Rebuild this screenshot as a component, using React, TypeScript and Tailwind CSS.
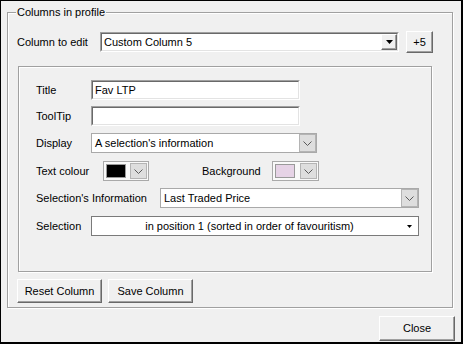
import type { ReactNode } from "react"

const etched = "border border-[#a0a0a0] shadow-[inset_1px_1px_0_#ffffff,1px_1px_0_#ffffff]"

function Chevron() {
  return (
    <svg width="9" height="5" viewBox="0 0 9 5" className="block">
      <polyline points="0.5,0.5 4.5,4.5 8.5,0.5" fill="none" stroke="#5a5a5a" strokeWidth="1" />
    </svg>
  )
}

function Triangle({ w = 7, h = 4 }: { w?: number; h?: number }) {
  return (
    <svg width={w} height={h} viewBox={`0 0 ${w} ${h}`} className="block">
      <polygon points={`0,0 ${w},0 ${w / 2},${h}`} fill="#000000" />
    </svg>
  )
}

// sunken 3D edit box, like a WinForms Fixed3D TextBox
function Sunken({ width, children }: { width: string; children?: ReactNode }) {
  return (
    <div className={`${width} h-[20px] border border-t-[#a0a0a0] border-l-[#a0a0a0] border-r-white border-b-white`}>
      <div className="flex h-full items-center border border-t-[#696969] border-l-[#696969] border-r-[#e3e3e3] border-b-[#e3e3e3] bg-white">
        {children}
      </div>
    </div>
  )
}

function FlatCombo({ width, value }: { width: string; value: string }) {
  return (
    <div className={`${width} flex h-[20px] border border-[#a9a9a9] bg-white`}>
      <span className="flex-1 truncate pl-[3px] leading-[18px]">{value}</span>
      <div className="flex w-[17px] items-center justify-center border border-[#b4b4b4] bg-[#dedede]">
        <Chevron />
      </div>
    </div>
  )
}

function ColourPicker({ width, colour }: { width: string; colour: string }) {
  return (
    <div className={`${width} flex h-[20px] items-center border border-[#a9a9a9] bg-[#f9f9f9] pl-[2px] pr-[1px]`}>
      <div className={`h-[14px] w-[20px] border border-[#9a9a9a] ${colour}`} />
      <div className="ml-auto flex h-[16px] w-[17px] items-center justify-center border border-[#b4b4b4] bg-[#dedede]">
        <Chevron />
      </div>
    </div>
  )
}

function Button({ width, height, children }: { width: string; height: string; children: ReactNode }) {
  return (
    <div
      className={`${width} ${height} flex items-center justify-center border border-t-white border-l-white border-r-[#696969] border-b-[#696969] bg-[#f0f0f0] shadow-[inset_-1px_-1px_0_#a0a0a0]`}
    >
      {children}
    </div>
  )
}

function Label({ width, children }: { width: string; children: ReactNode }) {
  return <span className={`${width} shrink-0`}>{children}</span>
}

export default function App() {
  return (
    <div className="flex h-[344px] w-[463px] flex-col border-t border-l border-r-2 border-b-2 border-black bg-[#f0f0f0] font-['Liberation_Sans',Arial,sans-serif] text-[11px] text-black">
      {/* Columns in profile */}
      <div className={`relative ml-[6px] mt-[11px] h-[296px] w-[446px] pl-[9px] pt-[18px] ${etched}`}>
        <span className="absolute left-[8px] top-[-8px] bg-[#f0f0f0] px-[1px] leading-[14px]">Columns in profile</span>

        <div className="flex h-[22px] items-center">
          <Label width="w-[83px]">Column to edit</Label>
          <div className="h-[20px] w-[299px] border border-t-[#a0a0a0] border-l-[#a0a0a0] border-r-white border-b-white">
            <div className="flex h-full border border-t-[#696969] border-l-[#696969] border-r-[#e3e3e3] border-b-[#e3e3e3] bg-white">
              <span className="flex-1 pl-[2px] leading-[16px]">Custom Column 5</span>
              <div className="flex w-[16px] items-center justify-center border border-t-white border-l-white border-r-[#696969] border-b-[#696969] bg-[#f0f0f0] shadow-[inset_-1px_-1px_0_#a0a0a0]">
                <Triangle />
              </div>
            </div>
          </div>
          <div className="ml-[7px]">
            <Button width="w-[27px]" height="h-[22px]">+5</Button>
          </div>
        </div>

        {/* column details panel */}
        <div className={`ml-[1px] mt-[13px] h-[206px] w-[414px] pl-[17px] pt-[13px] ${etched}`}>
          <div className="flex h-[20px] items-center">
            <Label width="w-[55px]">Title</Label>
            <Sunken width="w-[209px]">
              <span className="pl-[2px]">Fav LTP</span>
            </Sunken>
          </div>

          <div className="mt-[6px] flex h-[20px] items-center">
            <Label width="w-[55px]">ToolTip</Label>
            <Sunken width="w-[209px]" />
          </div>

          <div className="mt-[7px] flex h-[20px] items-center">
            <Label width="w-[55px]">Display</Label>
            <FlatCombo width="w-[226px]" value="A selection's information" />
          </div>

          <div className="mt-[8px] flex h-[20px] items-center">
            <Label width="w-[67px]">Text colour</Label>
            <ColourPicker width="w-[46px]" colour="bg-black" />
            <span className="ml-[53px] w-[70px] shrink-0">Background</span>
            <ColourPicker width="w-[47px]" colour="bg-[#e6d3e6]" />
          </div>

          <div className="mt-[7px] flex h-[20px] items-center">
            <Label width="w-[124px]">Selection's Information</Label>
            <FlatCombo width="w-[259px]" value="Last Traded Price" />
          </div>

          <div className="mt-[8px] flex h-[20px] items-center">
            <Label width="w-[55px]">Selection</Label>
            <div className="flex h-[20px] w-[328px] items-center border border-[#7a7a7a] bg-white">
              <span className="flex-1 text-center">in position 1 (sorted in order of favouritism)</span>
              <div className="mr-[6px]">
                <Triangle w={5} h={3} />
              </div>
            </div>
          </div>
        </div>

        <div className="mt-[7px] flex gap-[6px]">
          <Button width="w-[85px]" height="h-[24px]">Reset Column</Button>
          <Button width="w-[85px]" height="h-[24px]">Save Column</Button>
        </div>
      </div>

      <div className="mr-[6px] mt-[8px] self-end">
        <Button width="w-[76px]" height="h-[25px]">Close</Button>
      </div>
    </div>
  )
}
